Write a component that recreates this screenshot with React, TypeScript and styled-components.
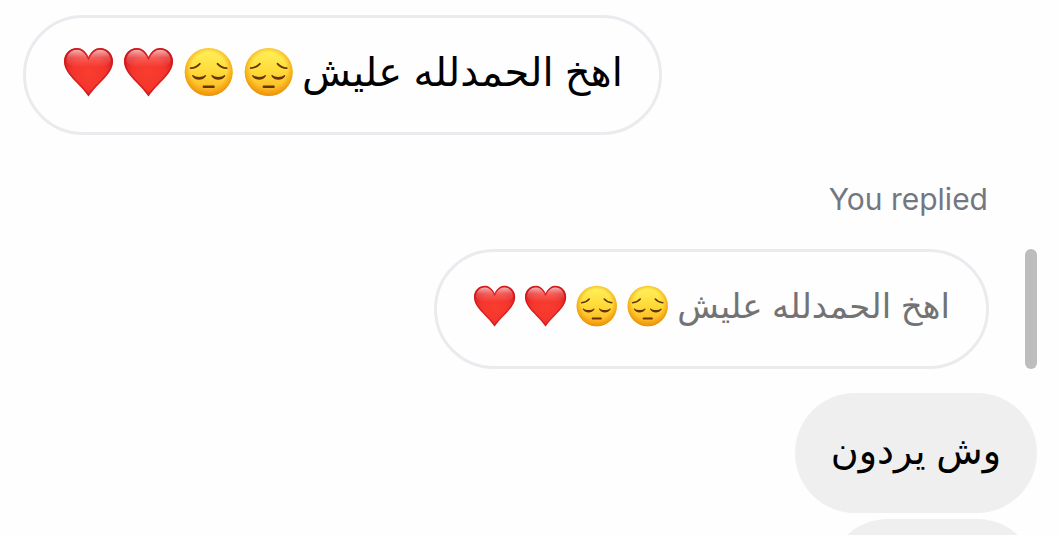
import React, { useId } from "react";
import styled, { createGlobalStyle } from "styled-components";

const GlobalStyle = createGlobalStyle`
  *, *::before, *::after { box-sizing: border-box; }
  body {
    margin: 0;
    background: #fefefe;
    color: #000;
    font-family: "Inter", "DejaVu Sans", sans-serif;
  }
`;

const Thread = styled.main`
  display: flex;
  flex-direction: column;
  height: 100vh;
  padding: 15px 23px 0;
  overflow: hidden;
`;

const Bubble = styled.div<{ $tone: "outline" | "fill"; $size?: number }>`
  display: flex;
  flex: none;
  align-items: center;
  height: 120px;
  padding: 0 36px 6px;
  border: ${(p) => (p.$tone === "outline" ? "3px solid #e9ebee" : "0")};
  border-radius: 60px;
  background: ${(p) => (p.$tone === "fill" ? "#efefef" : "#fefefe")};
  font-size: ${(p) => p.$size ?? 38}px;
  line-height: 54px;
  white-space: nowrap;
`;

const MessageText = styled.span<{ $muted?: boolean }>`
  color: ${(p) => (p.$muted ? "#737373" : "#000")};
`;

const Received = styled.section`
  display: flex;
  justify-content: flex-start;
`;

const Sent = styled.section`
  display: flex;
  flex: none;
  flex-direction: column;
  align-items: flex-end;
  gap: 6px;
`;

const ReplyLabel = styled.p`
  margin: 46px 49px 32px 0;
  align-self: flex-end;
  color: #737780;
  font-size: 30px;
  line-height: 36px;
`;

const Quote = styled.div`
  display: flex;
  align-self: flex-end;
  flex: none;
  gap: 36px;
  margin-bottom: 24px;
`;

const QuoteBar = styled.div`
  width: 12px;
  border-radius: 6px;
  background: #bdbdbd;
`;

const Emoji = styled.svg<{ $small?: boolean }>`
  flex: none;
  width: ${(p) => (p.$small ? 42 : 50)}px;
  height: ${(p) => (p.$small ? 42 : 50)}px;
  margin: 0 8px 0 ${(p) => (p.$small ? 1 : 2)}px;
`;

const NextBubble = styled(Bubble)`
  width: 209px;
`;

function Heart({ small }: { small?: boolean }) {
  const id = useId();
  const shape =
    "M24.5 10C21.5 4 17.5 1 13 1C6 1 0 6.5 0 14.5C0 27 15.5 36 24.5 49.5C33.5 36 49 27 49 14.5C49 6.5 43 1 36 1C31.5 1 27.5 4 24.5 10Z";
  return (
    <Emoji $small={small} viewBox="0 0 50 50" role="img" aria-label="red heart">
      <defs>
        <radialGradient id={id + "r"} gradientUnits="userSpaceOnUse" cx="24.5" cy="26" r="27">
          <stop offset="0" stopColor="#f83d2d" />
          <stop offset=".6" stopColor="#f5352d" />
          <stop offset="1" stopColor="#dc1f22" />
        </radialGradient>
        <linearGradient id={id + "g"} x1="0" y1="0" x2="0" y2="1">
          <stop offset="0" stopColor="#fff" stopOpacity=".65" />
          <stop offset=".45" stopColor="#fff" stopOpacity=".2" />
          <stop offset="1" stopColor="#fff" stopOpacity="0" />
        </linearGradient>
      </defs>
      <path d={shape} fill={`url(#${id}r)`} />
      <path
        d="M24.5 13C21.5 6 17.5 2.8 13 2.8C7 2.8 2.5 7.5 2.5 14C6 22 16 20 24.5 20C33 20 43 22 46.5 14C46.5 7.5 42 2.8 36 2.8C31.5 2.8 27.5 6 24.5 13Z"
        fill={`url(#${id}g)`}
      />
      <path
        d="M24.5 11.5C21.5 4.9 17.5 1.8 13 1.8C6.5 1.8 .8 7 .8 14.5C.8 26.5 15.8 35.5 24.5 48C33.2 35.5 48.2 26.5 48.2 14.5C48.2 7 42.5 1.8 36 1.8C31.5 1.8 27.5 4.9 24.5 11.5Z"
        fill="none"
        stroke="#c4161c"
        strokeWidth="1.5"
        strokeOpacity=".65"
      />
    </Emoji>
  );
}

function Pensive({ small }: { small?: boolean }) {
  const id = useId();
  return (
    <Emoji $small={small} viewBox="0 0 50 50" role="img" aria-label="pensive face">
      <defs>
        <linearGradient id={id + "f"} x1="0" y1="0" x2="0" y2="1">
          <stop offset="0" stopColor="#fff25c" />
          <stop offset=".5" stopColor="#ffda38" />
          <stop offset="1" stopColor="#fbaf22" />
        </linearGradient>
        <radialGradient id={id + "e"} cx=".5" cy=".46" r=".54">
          <stop offset=".68" stopColor="#f19400" stopOpacity="0" />
          <stop offset="1" stopColor="#e98b05" stopOpacity=".85" />
        </radialGradient>
      </defs>
      <circle cx="24.7" cy="25" r="24" fill={`url(#${id}f)`} />
      <circle cx="24.7" cy="25" r="24" fill={`url(#${id}e)`} />
      <g fill="none" stroke="#653406" strokeLinecap="round">
        <path d="M6.7 21.2Q12.5 20.7 15.8 16.8M33.6 16.8Q36.9 20.7 42.7 21.2" strokeWidth="1.8" />
        <path d="M19.8 39.8H29.6" strokeWidth="2.4" />
      </g>
      <path
        d="M8.9 28C11.5 30.5 18.6 30.5 21.2 28C21.9 27.7 22.2 28.4 21.8 29.2C19 33.9 11.1 33.9 8.3 29.2C7.9 28.4 8.2 27.7 8.9 28ZM28.2 28C30.8 30.5 37.9 30.5 40.5 28C41.2 27.7 41.5 28.4 41.1 29.2C38.3 33.9 30.4 33.9 27.6 29.2C27.2 28.4 27.5 27.7 28.2 28Z"
        fill="#653406"
      />
    </Emoji>
  );
}

function PraiseMessage({ quoted }: { quoted?: boolean }) {
  return (
    <Bubble $tone="outline" $size={quoted ? 34 : 40}>
      <Heart small={quoted} />
      <Heart small={quoted} />
      <Pensive small={quoted} />
      <Pensive small={quoted} />
      <MessageText lang="ar" dir="rtl" $muted={quoted}>
        اهخ الحمدلله عليش
      </MessageText>
    </Bubble>
  );
}

export default function App() {
  return (
    <>
      <GlobalStyle />
      <Thread>
        <Received>
          <PraiseMessage />
        </Received>
        <ReplyLabel>You replied</ReplyLabel>
        <Quote>
          <PraiseMessage quoted />
          <QuoteBar />
        </Quote>
        <Sent>
          <Bubble $tone="fill">
            <MessageText lang="ar" dir="rtl">
              وش يردون
            </MessageText>
          </Bubble>
          <NextBubble $tone="fill" />
        </Sent>
      </Thread>
    </>
  );
}
